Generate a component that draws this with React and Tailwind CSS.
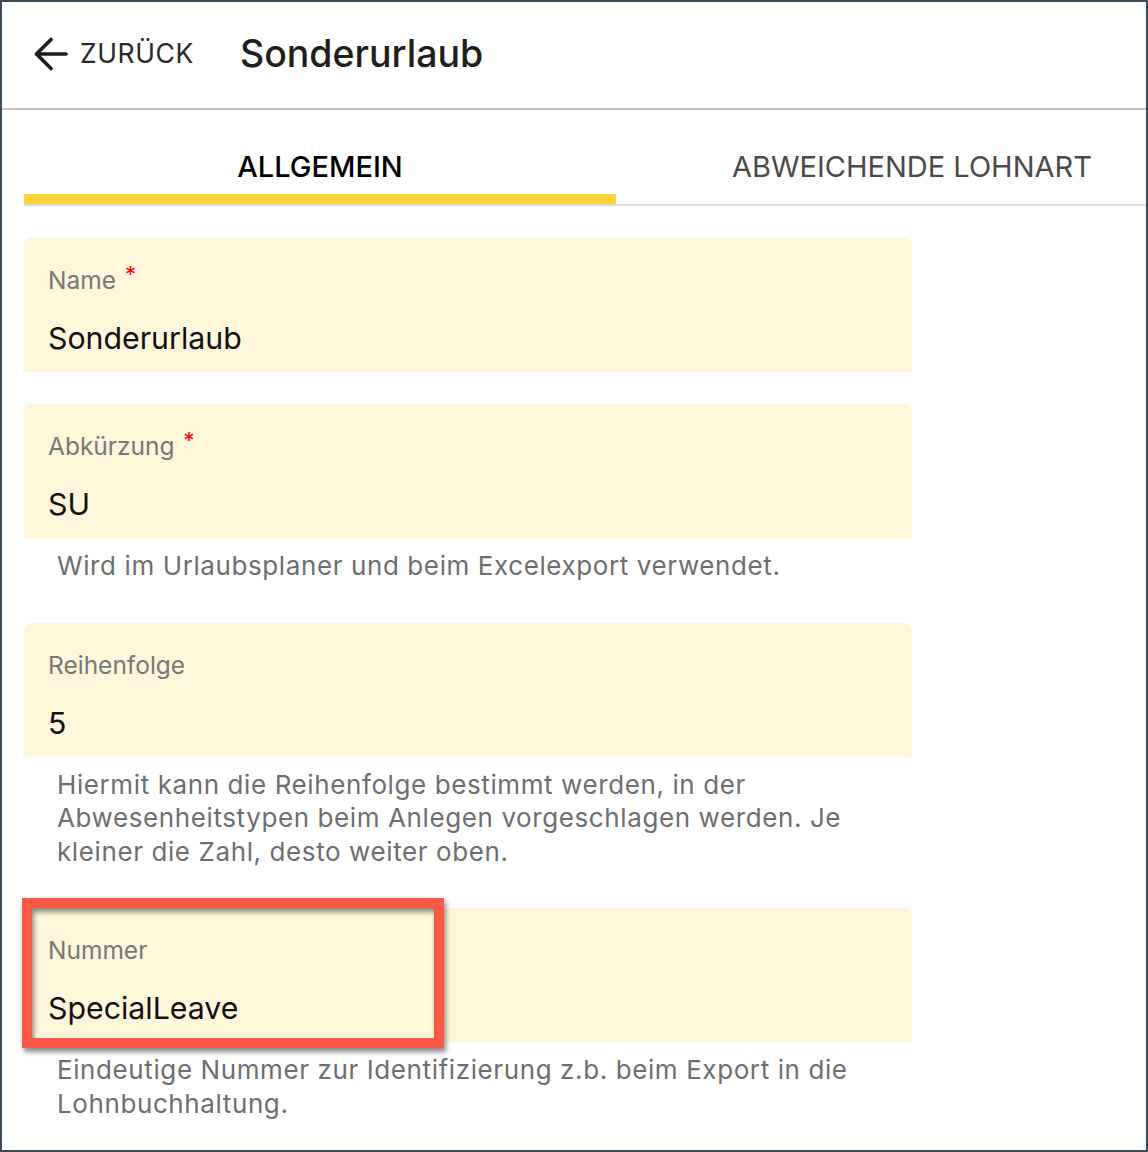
function BackArrow() {
  return (
    <svg width="34" height="34" viewBox="0 0 34 34" fill="none" stroke="#1c1c1c" strokeWidth="3.6" strokeLinecap="round" strokeLinejoin="round">
      <path d="M32 17H3" />
      <path d="M17 2.5L2.5 17L17 31.5" />
    </svg>
  )
}

function Field({ label, value, required, helper, children }) {
  return (
    <div className="mb-[32px]">
      <div className="relative">
        <div className="bg-[#fff6db] rounded-t-[7px] h-[134px] pl-[24px] pt-[26px]">
          <div className="text-[24.5px] leading-[32px] text-[#787878]">
            {label}
            {required && <span className="ml-[9px] text-[22px] leading-[0] text-[#ff0000] align-[7px]">*</span>}
          </div>
          <div className="mt-[22px] text-[30.3px] leading-[40px] text-[#111]">{value}</div>
        </div>
        {children}
      </div>
      {helper && (
        <div className="pt-[11px] pb-[8px] pl-[33px] pr-[30px] text-[26px] leading-[33.5px] tracking-[0.6px] text-[#6e6e6e]">
          {helper}
        </div>
      )}
    </div>
  )
}

export default function App() {
  return (
    <div className="w-[1148px] h-[1152px] border-2 border-[#3b4a57] bg-white overflow-hidden font-['Inter',sans-serif]">
      <div className="h-[108px] border-b-2 border-[#c4c4c4] flex items-center pl-[32px]">
        <div className="flex items-center gap-[12px] mt-[-3px]">
          <BackArrow />
          <span className="text-[26.5px] text-[#2a2a2a] tracking-[0.6px]">ZURÜCK</span>
        </div>
        <div className="ml-[46px] text-[37.5px] font-medium text-[#1e1e1e] mt-[-2px]">Sonderurlaub</div>
      </div>

      <div className="ml-[22px] overflow-hidden border-b-2 border-[#dcdcdc] flex">
        <div className="w-[592px] shrink-0 flex flex-col">
          <div className="pt-[39px] pb-[9px] text-center text-[29px] leading-[36px] font-medium text-black">ALLGEMEIN</div>
          <div className="h-[10px] bg-[#ffd335]" />
        </div>
        <div className="w-[592px] shrink-0 flex flex-col">
          <div className="pt-[39px] pb-[9px] text-center text-[29px] leading-[36px] text-[#4a4a4a]">ABWEICHENDE LOHNART</div>
          <div className="h-[10px]" />
        </div>
      </div>

      <div className="pl-[22px] pt-[32px] w-[910px]">
        <Field label="Name" value="Sonderurlaub" required />
        <Field
          label="Abkürzung"
          value="SU"
          required
          helper="Wird im Urlaubsplaner und beim Excelexport verwendet."
        />
        <Field
          label="Reihenfolge"
          value="5"
          helper="Hiermit kann die Reihenfolge bestimmt werden, in der Abwesenheitstypen beim Anlegen vorgeschlagen werden. Je kleiner die Zahl, desto weiter oben."
        />
        <Field
          label="Nummer"
          value="SpecialLeave"
          helper="Eindeutige Nummer zur Identifizierung z.b. beim Export in die Lohnbuchhaltung."
        >
          <div className="absolute left-[-2px] top-[-10px] w-[422px] h-[150px] border-[10px] border-[#fd5846] shadow-[2px_4px_5px_rgba(0,0,0,0.45),inset_2px_4px_5px_rgba(0,0,0,0.45)]" />
        </Field>
      </div>
    </div>
  )
}
